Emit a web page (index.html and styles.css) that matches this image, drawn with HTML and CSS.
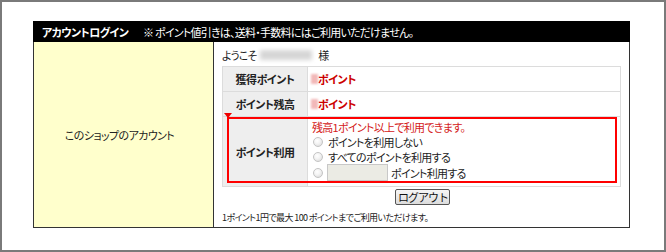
FILE: index.html
```html
<!DOCTYPE html>
<html lang="ja">
<head>
<meta charset="utf-8">
<link rel="stylesheet" href="styles.css">
</head>
<body>
<div class="frame">
  <div class="panel">
    <div class="head">
      <span class="head-title">アカウントログイン</span>
      <span class="head-note">※ ポイント値引きは、送料・手数料にはご利用いただけません。</span>
    </div>
    <div class="body">
      <div class="side">このショップのアカウント</div>
      <div class="main">
        <div class="welcome">ようこそ<span class="blur-name"></span>様</div>
        <div class="points">
          <div class="row">
            <div class="label">獲得ポイント</div>
            <div class="value"><span class="blur-num"></span>ポイント</div>
          </div>
          <div class="row">
            <div class="label">ポイント残高</div>
            <div class="value"><span class="blur-num"></span>ポイント</div>
          </div>
          <div class="row row-use">
            <span class="marker"></span>
            <div class="label">ポイント利用</div>
            <div class="value-use">
              <div class="notice">残高1ポイント以上で利用できます。</div>
              <label class="opt"><input type="radio" name="u" class="radio">ポイントを利用しない</label>
              <label class="opt"><input type="radio" name="u" class="radio">すべてのポイントを利用する</label>
              <label class="opt opt-amount"><input type="radio" name="u" class="radio"><input type="text" class="amount">ポイント利用する</label>
            </div>
            <div class="highlight"></div>
          </div>
        </div>
        <div class="actions"><button class="logout">ログアウト</button></div>
        <div class="foot">1ポイント1円で最大 100 ポイントまでご利用いただけます。</div>
      </div>
    </div>
  </div>
</div>
</body>
</html>
```
FILE: styles.css
```css
* { box-sizing: border-box; }
html, body { margin: 0; padding: 0; background: #fff; }
body {
  font-family: "Noto Sans CJK JP", "Noto Sans", sans-serif;
  font-size: 11px;
  line-height: 14px;
  color: #222;
  font-feature-settings: "palt";
  letter-spacing: -0.7px;
}
.frame {
  width: 666px;
  height: 252px;
  border: 2px solid #7a7a7a;
  padding: 19px 0 0 31px;
}
.panel {
  width: 597px;
  border: 1px solid #333;
  border-top: none;
}
.head {
  background: #000;
  color: #fff;
  height: 21px;
  display: flex;
  align-items: center;
  padding-left: 9px;
  margin: 0 -1px;
  white-space: nowrap;
}
.head-title {
  font-weight: bold;
  width: 101px;
  flex-shrink: 0;
  letter-spacing: -0.6px;
}
.head-note { letter-spacing: -0.75px; }
.body {
  display: flex;
  height: 185px;
}
.side {
  width: 180px;
  flex-shrink: 0;
  background: #ffffcc;
  border-right: 1px solid #333;
  display: flex;
  align-items: center;
  justify-content: center;
  letter-spacing: -0.6px;
  padding-right: 8px;
}
.main {
  flex: 1;
  padding: 2px 0 0 8px;
}
.welcome {
  height: 22px;
  display: flex;
  align-items: center;
  letter-spacing: -1px;
}
.blur-name {
  display: inline-block;
  width: 52px;
  height: 10px;
  background: #d6d6d6;
  filter: blur(2px);
  margin: 0 6px 0 4px;
}
.points {
  width: 399px;
  border: 1px solid #dcdcdc;
}
.row {
  display: flex;
  height: 25px;
  border-bottom: 1px solid #dcdcdc;
}
.label {
  width: 85px;
  flex-shrink: 0;
  background: #eeeeee;
  border-right: 1px solid #dcdcdc;
  display: flex;
  align-items: center;
  justify-content: center;
  font-weight: bold;
  color: #222;
  letter-spacing: -0.5px;
}
.value {
  display: flex;
  align-items: center;
  padding-left: 3px;
  color: #cc0000;
  font-weight: bold;
  letter-spacing: -0.5px;
}
.blur-num {
  display: inline-block;
  width: 7px;
  height: 10px;
  background: #f2b8b8;
  filter: blur(1.2px);
}
.row-use {
  position: relative;
  height: 69px;
  border-bottom: none;
}
.value-use {
  padding: 3px 0 0 4px;
}
.notice { color: #d42020; height: 14px; }
.opt {
  display: flex;
  align-items: center;
  height: 15px;
  white-space: nowrap;
}
.opt-amount { height: 17px; }
.radio {
  appearance: none;
  -webkit-appearance: none;
  width: 10px;
  height: 10px;
  margin: 0 5px 0 1px;
  border: 1px solid #c4c4c4;
  border-radius: 50%;
  background: radial-gradient(circle at 40% 35%, #fff 0, #f4f4f4 40%, #d6d6d6 100%);
  flex-shrink: 0;
}
.opt-amount .radio { margin-right: 4px; }
.amount {
  width: 61px;
  height: 17px;
  margin: 0 3px 0 0;
  border: 1px solid #c8c8c8;
  background: #ebebe4;
  padding: 0;
  flex-shrink: 0;
}
.highlight {
  position: absolute;
  left: 4px;
  top: 0;
  right: 3px;
  bottom: 3px;
  border: 2px solid #ff0000;
  pointer-events: none;
}
.marker {
  position: absolute;
  left: 1px;
  top: -4px;
  width: 0;
  height: 0;
  border-left: 4px solid transparent;
  border-right: 4px solid transparent;
  border-top: 5px solid #ee0000;
}
.actions {
  width: 399px;
  display: flex;
  justify-content: center;
  padding-top: 2px;
}
.logout {
  font-family: inherit;
  font-size: 11px;
  letter-spacing: -1px;
  height: 16px;
  line-height: 12px;
  padding: 0 1px 0 2px;
  margin: 0 0 0 2px;
  border: 1px solid #555;
  border-radius: 2px;
  background: linear-gradient(#f6f6f6, #dcdcdc);
  color: #111;
}
.foot {
  margin-top: 7px;
  font-size: 9px;
  line-height: 12px;
  letter-spacing: -0.6px;
}
```
